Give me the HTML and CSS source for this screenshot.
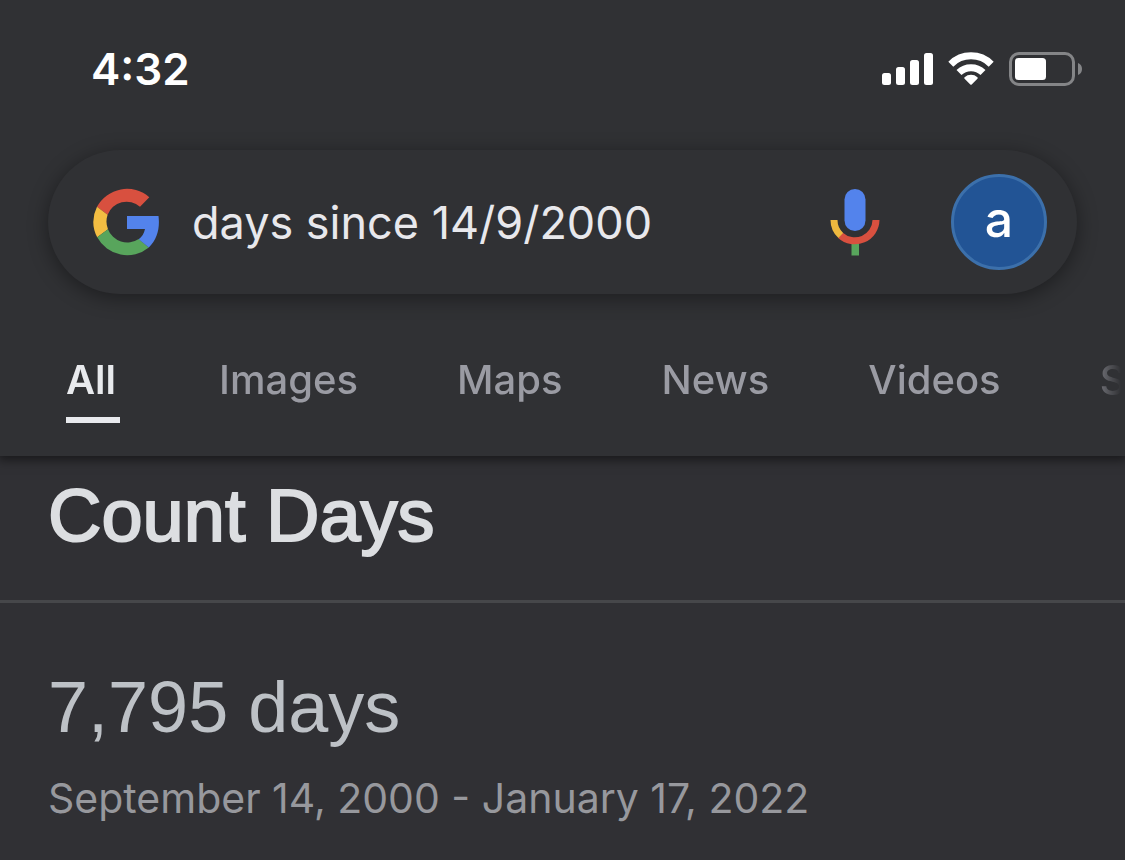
FILE: index.html
```html
<!DOCTYPE html>
<html lang="en">
<head>
    <meta charset="UTF-8">
    <meta name="viewport" content="width=device-width, initial-scale=1.0">
    <title>days since 14/9/2000</title>
    <link rel="stylesheet" href="styles.css">
</head>
<body>
    <header class="header">
        <div class="status-bar">
            <time class="clock">4:32</time>
            <div class="status-icons">
                <svg width="52" height="34" viewBox="0 0 52 34" fill="#fff" aria-hidden="true">
                    <rect x="0" y="21" width="9" height="12" rx="2.5"/>
                    <rect x="14" y="15" width="9" height="18" rx="2.5"/>
                    <rect x="28" y="8" width="9" height="25" rx="2.5"/>
                    <rect x="42" y="1" width="9" height="32" rx="2.5"/>
                </svg>
                <svg width="46" height="34" viewBox="0 0 46 34" aria-hidden="true">
                    <g fill="none" stroke="#fff" stroke-width="7">
                        <path d="M2.8 12.2A28.6 28.6 0 0 1 43.2 12.2"/>
                        <path d="M11 20.6A17 17 0 0 1 35 20.6"/>
                    </g>
                    <path d="M16.6 26.8a1 1 0 0 1 0-1.5a9.5 9.5 0 0 1 12.8 0a1 1 0 0 1 0 1.5L23.7 32.5a1 1 0 0 1-1.4 0z" fill="#fff"/>
                </svg>
                <svg width="74" height="34" viewBox="-1 0 74 34" aria-hidden="true">
                    <rect x="1.5" y="1.5" width="63" height="31" rx="8.5" fill="none" stroke="#848587" stroke-width="3"/>
                    <rect x="6" y="6" width="31" height="22" rx="3.5" fill="#fff"/>
                    <path d="M69 11a6.5 6.5 0 0 1 0 12z" fill="#848587"/>
                </svg>
            </div>
        </div>

        <form class="search">
            <svg class="logo" width="66" height="68" viewBox="0 0 66 68" role="img" aria-label="Google">
                <path d="M4 18.800A34 34 0 0 1 56.300 9.200L47 18.700A20.300 20.300 0 0 0 14.600 26.800z" fill="#d8503f"/>
                <path d="M4 18.800A34 34 0 0 0 4.200 49.300L15 41.200A20.500 20.500 0 0 1 14.600 26.800z" fill="#f3bd42"/>
                <path d="M4.200 49.300A34 34 0 0 0 55.800 59.500L45.700 51A20.500 20.500 0 0 1 15 41.200z" fill="#58a55c"/>
                <path d="M34 28H65.500C67 40 64.500 51 55.800 59.500L45.700 51.300C49 49 51 45.500 52 41H34z" fill="#5383ec"/>
            </svg>
            <input class="query" type="text" aria-label="Search" value="days since 14/9/2000">
            <button class="mic" type="button" aria-label="Search by voice">
                <svg width="50" height="68" viewBox="0 0 50 68" aria-hidden="true">
                    <rect x="14.5" y="1" width="21" height="42" rx="10.5" fill="#5383ec"/>
                    <path d="M21.5 55h7.5v12.5h-7.5z" fill="#58a55c"/>
                    <path d="M10.5 47.3A21.2 21.2 0 0 0 46 32" fill="none" stroke="#d8503f" stroke-width="7"/>
                    <path d="M4 32A21 21 0 0 0 10.8 47.5" fill="none" stroke="#eeb83f" stroke-width="7"/>
                </svg>
            </button>
            <button class="avatar" type="button" aria-label="Account">a</button>
        </form>

        <nav class="tabs">
            <a class="tab active" href="#">All</a>
            <a class="tab" href="#">Images</a>
            <a class="tab" href="#">Maps</a>
            <a class="tab" href="#">News</a>
            <a class="tab" href="#">Videos</a>
            <a class="tab" href="#">Shopping</a>
        </nav>
    </header>

    <main>
        <h1 class="title">Count Days</h1>
        <section class="result">
            <p class="answer">7,795 days</p>
            <p class="range">September 14, 2000 - January 17, 2022</p>
        </section>
    </main>
</body>
</html>
```

FILE: styles.css
```css
* {
    box-sizing: border-box;
}
body {
    margin: 0;
    background-color: #303034;
    color: #bdc1c6;
    font-family: Inter, "Liberation Sans", sans-serif;
    overflow-x: hidden;
}
.header {
    background-color: #303134;
    box-shadow: 0 2px 10px 2px rgba(0, 0, 0, 0.5);
}
.status-bar {
    display: flex;
    justify-content: space-between;
    align-items: center;
    height: 150px;
    padding: 0 43px 12px 91px;
}
.clock {
    color: #fff;
    font-size: 44px;
    font-weight: 600;
}
.status-icons {
    display: flex;
    gap: 14px;
}
.search {
    display: flex;
    align-items: center;
    height: 144px;
    margin: 0 48px;
    padding: 0 30px 0 45px;
    border-radius: 72px;
    background-color: #303134;
    box-shadow: 0 4px 20px rgba(0, 0, 0, 0.4);
}
.logo {
    flex: none;
}
.query {
    flex: 1;
    min-width: 0;
    margin-left: 33px;
    padding: 0;
    border: 0;
    outline: 0;
    background: none;
    color: #e8e8ec;
    font-family: inherit;
    font-size: 45px;
}
.mic {
    display: flex;
    margin: 0 71px 0 20px;
    padding: 0;
    border: 0;
    background: none;
}
.avatar {
    flex: none;
    width: 96px;
    height: 96px;
    padding: 0 0 6px;
    border: 3px solid #3c70ab;
    border-radius: 50%;
    background-color: #225495;
    color: #fff;
    font-family: inherit;
    font-size: 50px;
    font-weight: 500;
}
.tabs {
    display: flex;
    gap: 99px;
    padding: 55px 0 33px 66px;
    overflow: hidden;
    -webkit-mask-image: linear-gradient(to left, transparent 4px, #000 40px);
    mask-image: linear-gradient(to left, transparent 4px, #000 40px);
}
.tab {
    flex: none;
    height: 74px;
    color: #9a9ba3;
    font-size: 40px;
    font-weight: 500;
    line-height: 62px;
    text-decoration: none;
}
.active {
    min-width: 54px;
    border-bottom: 6px solid #e8eaed;
    color: #e8eaed;
    font-weight: 600;
}
.title {
    margin: 0;
    padding: 20px 48px 44px;
    border-bottom: 3px solid #46474a;
    color: #dcdee1;
    font-family: "Liberation Sans", Arial, sans-serif;
    font-size: 74px;
    font-weight: 400;
    line-height: 80px;
    -webkit-text-stroke: 2px #dcdee1;
}
.result {
    padding: 64px 48px 32px;
}
.answer {
    margin: 0;
    font-family: "Liberation Sans", Arial, sans-serif;
    font-size: 72px;
    line-height: 80px;
}
.range {
    margin: 23px 0 0;
    color: #97989d;
    font-size: 41px;
    line-height: 56px;
}
```
